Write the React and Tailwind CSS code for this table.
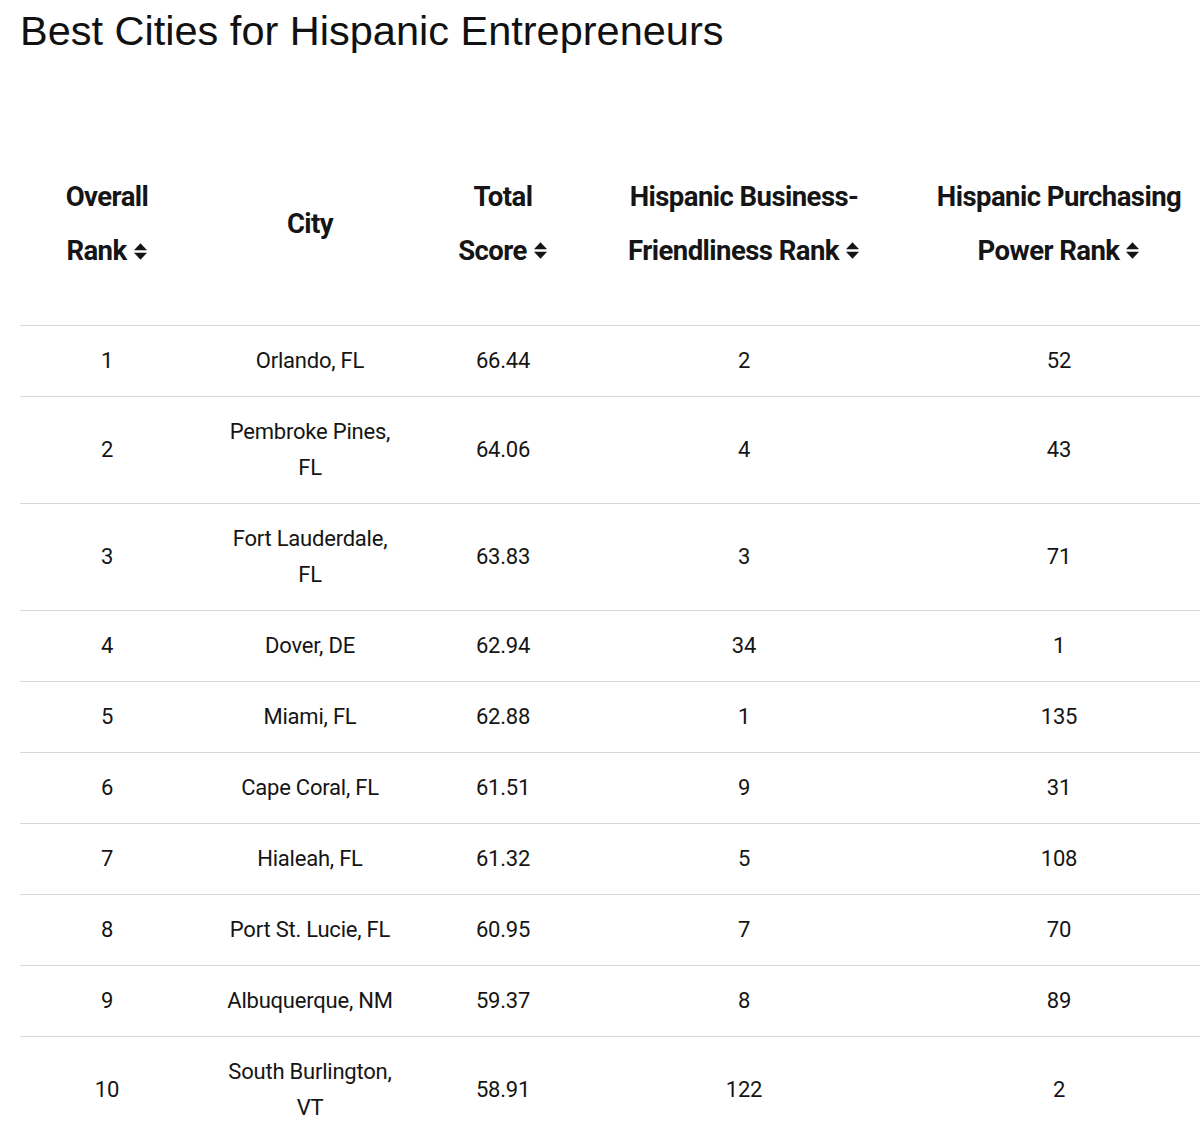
import React from "react";

const rows = [
  ["1", "Orlando, FL", "66.44", "2", "52"],
  ["2", "Pembroke Pines, FL", "64.06", "4", "43"],
  ["3", "Fort Lauderdale, FL", "63.83", "3", "71"],
  ["4", "Dover, DE", "62.94", "34", "1"],
  ["5", "Miami, FL", "62.88", "1", "135"],
  ["6", "Cape Coral, FL", "61.51", "9", "31"],
  ["7", "Hialeah, FL", "61.32", "5", "108"],
  ["8", "Port St. Lucie, FL", "60.95", "7", "70"],
  ["9", "Albuquerque, NM", "59.37", "8", "89"],
  ["10", "South Burlington, VT", "58.91", "122", "2"],
];

function SortIcon() {
  return (
    <svg viewBox="0 0 12 16" className="inline-block w-[15px] h-[19px] ml-[6px] -mt-[3px] align-middle" fill="currentColor">
      <path d="M6 1 L11.5 7 H0.5 Z" />
      <path d="M6 15 L11.5 9 H0.5 Z" />
    </svg>
  );
}

export default function App() {
  return (
    <div className="w-[1200px] min-h-[1136px] bg-white overflow-hidden text-[#151515] font-['Roboto',sans-serif]">
      <h1 className="pl-[20px] pt-[7px] text-[41.5px] leading-[48px] font-['Liberation_Sans',Arial,sans-serif] text-[#111]">
        Best Cities for Hispanic Entrepreneurs
      </h1>

      <table className="ml-[20px] mt-[67px] w-[1190px] table-fixed border-collapse">
        <colgroup>
          <col className="w-[174px]" />
          <col className="w-[232px]" />
          <col className="w-[154px]" />
          <col className="w-[328px]" />
          <col className="w-[302px]" />
        </colgroup>
        <thead>
          <tr className="border-b border-[#d8d8d8] text-[27.5px] leading-[54px] font-bold tracking-[-0.02em]">
            <th className="px-[30px] pt-[48px] pb-[47px] text-center">Overall Rank<SortIcon /></th>
            <th className="px-6 text-center">City</th>
            <th className="px-[22px] text-center">Total Score<SortIcon /></th>
            <th className="px-4 text-center">Hispanic Business-Friendliness Rank<SortIcon /></th>
            <th className="px-3 text-center">Hispanic Purchasing Power Rank<SortIcon /></th>
          </tr>
        </thead>
        <tbody className="text-[22px] leading-[36px] tracking-[-0.01em]">
          {rows.map((r, i) => (
            <tr key={i} className="border-b border-[#d8d8d8] last:border-b-0">
              <td className="py-[17px] text-center">{r[0]}</td>
              <td className="px-[26px] py-[17px] text-center">{r[1]}</td>
              <td className="py-[17px] text-center">{r[2]}</td>
              <td className="py-[17px] text-center">{r[3]}</td>
              <td className="py-[17px] text-center">{r[4]}</td>
            </tr>
          ))}
        </tbody>
      </table>
    </div>
  );
}
